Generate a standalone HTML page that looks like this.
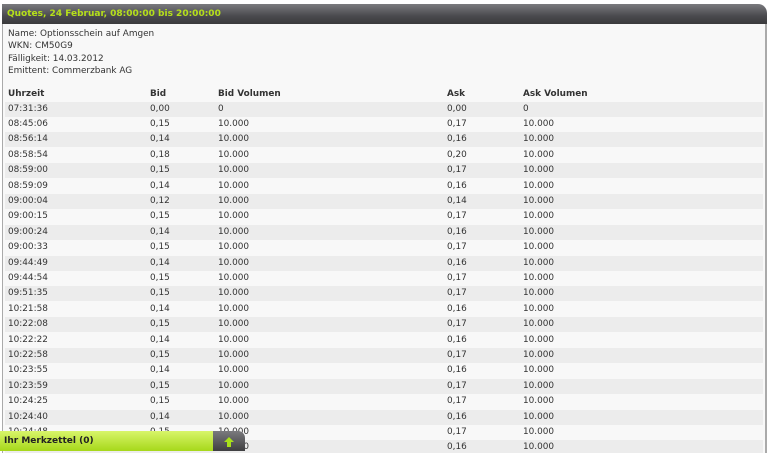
<!DOCTYPE html><html><head><style>
html,body{margin:0;width:770px;height:453px;overflow:hidden}
body{background:#fff;font-family:"DejaVu Sans","Liberation Sans",sans-serif;font-size:8.9px;color:#333;position:relative}
.hd{position:absolute;left:2px;top:4px;width:765px;height:20px;background:linear-gradient(#7a7a7e,#4a4a4e 60%,#3a3a3c);border-top-right-radius:9px;color:#b6e01a;font-weight:bold;line-height:20px;padding-left:5px;box-sizing:border-box;font-size:9px}
.box{position:absolute;left:2px;top:24px;width:765px;height:429px;border-left:1px solid #aaa;border-right:2px solid #aaa;background:#f8f8f8;box-sizing:border-box}
.t{position:absolute;white-space:nowrap}
.r{position:absolute;left:5px;width:758px;height:15px}
.g{background:#ececec}
.r span{position:absolute;top:2px}
.b{font-weight:bold}
.bar{position:absolute;left:0;top:431px;width:213px;height:20px;background:linear-gradient(#d8f56a,#a6d81a);font-weight:bold;color:#222;line-height:20px;padding-left:4px;box-sizing:border-box;font-size:9px}
.tab{position:absolute;left:213px;top:431px;width:32px;height:20px;background:linear-gradient(#7a7a7e,#3e3e40);border-top-right-radius:7px}
</style></head><body>
<div class="hd">Quotes, 24 Februar, 08:00:00 bis 20:00:00</div>
<div class="box"></div>
<div class="t" style="left:8px;top:28px;line-height:12.3px">Name: Optionsschein auf Amgen<br>WKN: CM50G9<br>Fälligkeit: 14.03.2012<br>Emittent: Commerzbank AG</div>
<div id="rows"></div>
<div class="bar">Ihr Merkzettel (0)</div>
<div class="tab"><svg width="32" height="20"><path d="M16 6l-5 5h3v5h4v-5h3z" fill="#a8e01a"/></svg></div>
<script>
var d=[["Uhrzeit","Bid","Bid Volumen","Ask","Ask Volumen"],
["07:31:36","0,00","0","0,00","0"],["08:45:06","0,15","10.000","0,17","10.000"],["08:56:14","0,14","10.000","0,16","10.000"],["08:58:54","0,18","10.000","0,20","10.000"],["08:59:00","0,15","10.000","0,17","10.000"],["08:59:09","0,14","10.000","0,16","10.000"],["09:00:04","0,12","10.000","0,14","10.000"],["09:00:15","0,15","10.000","0,17","10.000"],["09:00:24","0,14","10.000","0,16","10.000"],["09:00:33","0,15","10.000","0,17","10.000"],["09:44:49","0,14","10.000","0,16","10.000"],["09:44:54","0,15","10.000","0,17","10.000"],["09:51:35","0,15","10.000","0,17","10.000"],["10:21:58","0,14","10.000","0,16","10.000"],["10:22:08","0,15","10.000","0,17","10.000"],["10:22:22","0,14","10.000","0,16","10.000"],["10:22:58","0,15","10.000","0,17","10.000"],["10:23:55","0,14","10.000","0,16","10.000"],["10:23:59","0,15","10.000","0,17","10.000"],["10:24:25","0,15","10.000","0,17","10.000"],["10:24:40","0,14","10.000","0,16","10.000"],["10:24:48","0,15","10.000","0,17","10.000"],["10:24:55","0,14","10.000","0,16","10.000"]];
var x=[3,145,213,442,518],h="";
d.forEach(function(r,i){var top=i==0?87:101.6+(i-1)*15.4;h+='<div class="r'+(i>0&&i%2==1?' g':'')+(i==0?' b':'')+'" style="top:'+top+'px">';r.forEach(function(c,j){h+='<span style="left:'+x[j]+'px">'+c+'</span>'});h+='</div>'});
document.getElementById('rows').innerHTML=h;
</script>
</body></html>
